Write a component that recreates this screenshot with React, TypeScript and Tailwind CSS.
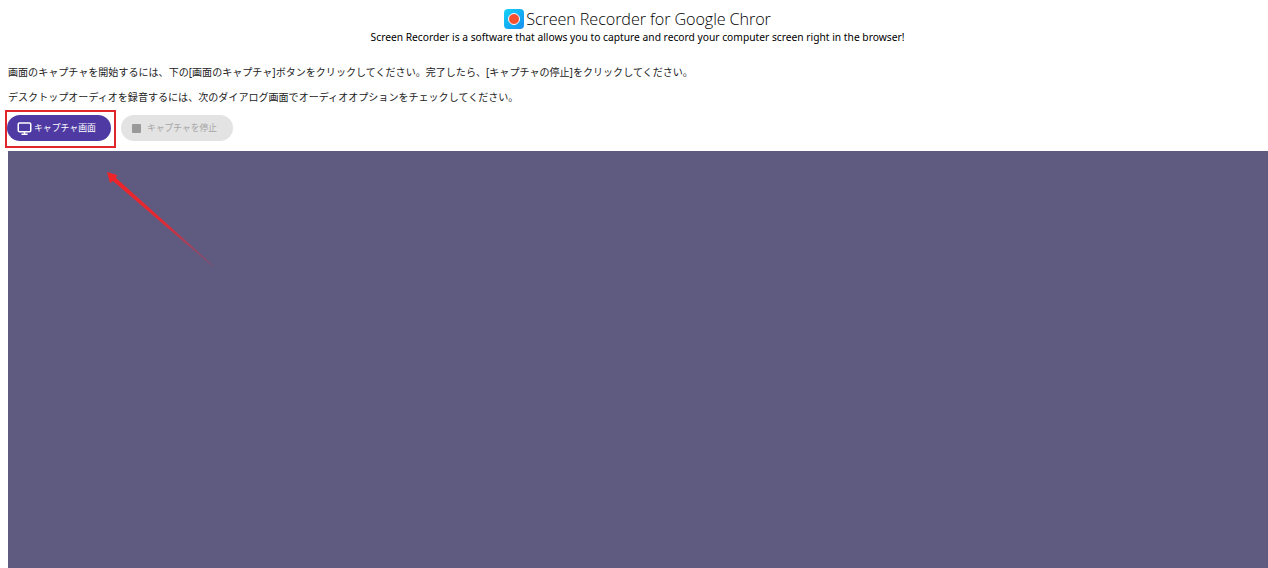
import { Monitor } from 'lucide-react';

const sans = "font-['Noto_Sans','Noto_Sans_CJK_JP',sans-serif]";

export default function App() {
  return (
    <div className={`relative h-[568px] overflow-hidden bg-white text-black ${sans}`}>
      {/* Header */}
      <div className="flex flex-col items-center pl-[7px] pt-[8px]">
        <div className="flex h-[22px] items-center gap-[2px]">
          <span className="flex h-[20px] w-[20px] items-center justify-center rounded-[4px] bg-gradient-to-br from-[#19d3f5] to-[#1a8cf0]">
            <span className="h-[12px] w-[12px] rounded-full border-[1.5px] border-white bg-[#f4502f]" />
          </span>
          <h1 className="font-['Open_Sans',sans-serif] text-[16.2px] leading-[22px] font-light tracking-[-0.1px]">Screen Recorder for Google Chror</h1>
        </div>
        <p className="text-[10.25px] leading-[15px]">
          Screen Recorder is a software that allows you to capture and record your computer screen right in the browser!
        </p>
      </div>

      {/* Instructions */}
      <div className="pl-[8px] pt-[20px] text-[10.06px] text-[#222]">
        <p className="leading-[15px]">
          画面のキャプチャを開始するには、下の[画面のキャプチャ]ボタンをクリックしてください。完了したら、[キャプチャの停止]をクリックしてください。
        </p>
        <p className="mt-[10px] leading-[15px]">
          デスクトップオーディオを録音するには、次のダイアログ画面でオーディオオプションをチェックしてください。
        </p>
      </div>

      {/* Buttons */}
      <div className="flex items-center gap-[10px] pl-[7px] pt-[10px]">
        <button className="flex h-[26px] w-[104px] items-center gap-[2px] rounded-full bg-[#4f3aa3] pl-[10px] text-[8.85px] text-white">
          <Monitor size={15} strokeWidth={2.4} />
          <span className="pt-[1px]">キャプチャ画面</span>
        </button>
        <button className="flex h-[26px] w-[112px] items-center gap-[6px] rounded-full bg-[#e3e3e3] pl-[11px] text-[8.75px] text-[#a5a5a5]">
          <span className="h-[9px] w-[9px] rounded-[1px] bg-[#999]" />
          <span className="pt-[1px]">キャプチャを停止</span>
        </button>
      </div>

      {/* Video panel */}
      <div className="ml-[8px] mt-[10px] h-[417px] bg-[#5f5a80]" />

      {/* Annotation: red box around the capture button */}
      <div className="absolute left-[5px] top-[110px] h-[38px] w-[111px] border-2 border-[#e0262a]" />

      {/* Annotation: red arrow */}
      <svg className="absolute left-[100px] top-[165px]" width="120" height="105" viewBox="0 0 120 105">
        <defs>
          <linearGradient id="arrowFade" x1="8" y1="8" x2="113" y2="100" gradientUnits="userSpaceOnUse">
            <stop offset="0" stopColor="#f02428" />
            <stop offset="0.55" stopColor="#e02a35" />
            <stop offset="1" stopColor="#a84060" stopOpacity="0.35" />
          </linearGradient>
        </defs>
        <polygon points="7,7 17,10 16,13 113,100 112,101 13,16 10,18" fill="url(#arrowFade)" />
      </svg>
    </div>
  );
}
